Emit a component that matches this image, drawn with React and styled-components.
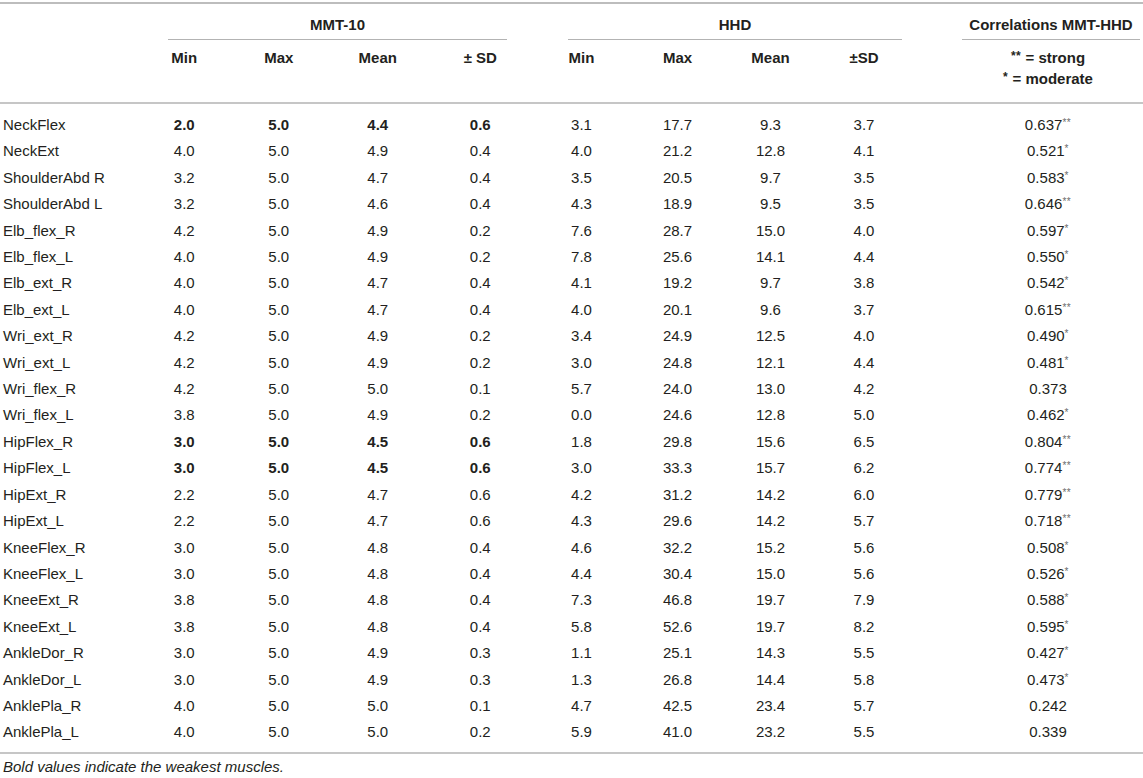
import React from 'react'
import styled, { createGlobalStyle } from 'styled-components'

const GlobalStyle = createGlobalStyle`
  html, body {
    margin: 0;
    padding: 0;
    background: #fff;
  }
  body {
    font-family: "Liberation Sans", Arial, Helvetica, sans-serif;
    color: #231f20;
  }
`

const Wrap = styled.div`
  width: 1143px;
  padding-top: 2px;
`

const Table = styled.table`
  width: 1143px;
  table-layout: fixed;
  border-collapse: collapse;
  border-top: 2px solid #bdbdbd;
  font-size: 15px;
`

const Head = styled.thead`
  border-bottom: 2px solid #c6c6c6;
`

const Body = styled.tbody`
  border-bottom: 2px solid #c6c6c6;

  tr:first-child td {
    padding-top: 8px;
  }
  tr:last-child td {
    padding-bottom: 6px;
  }
`

const GroupTh = styled.th`
  padding: 0;
  font-weight: 700;
  vertical-align: top;
`

const GroupLabel = styled.div`
  margin: 0 ${p => p.$mr}px 0 ${p => p.$ml}px;
  padding: 13px 0 6px;
  line-height: 16px;
  text-align: center;
  border-bottom: 1px solid #b3b3b3;
`

const SubTh = styled.th`
  padding: 7px 0 13px ${p => p.$pl || 0}px;
  line-height: 21px;
  font-weight: 700;
  text-align: center;
  vertical-align: top;
  white-space: nowrap;
`

const Cell = styled.td`
  padding: 0 0 0 ${p => p.$pl || 0}px;
  height: 26.4px;
  line-height: 26.4px;
  text-align: center;
  font-weight: ${p => (p.$bold ? 700 : 400)};
  white-space: nowrap;
`

const LabelCell = styled(Cell)`
  text-align: left;
  padding-left: 3px;
`

const Star = styled.span`
  font-size: ${p => (p.$head ? 12 : 10)}px;
  line-height: 0;
  vertical-align: ${p => (p.$head ? 3 : 4)}px;
  color: ${p => (p.$head ? '#231f20' : '#6b6b6b')};
  letter-spacing: 0.5px;
`

const Note = styled.p`
  margin: 0;
  padding: 5px 3px 0;
  font-size: 15px;
  line-height: 16px;
  font-style: italic;
  color: #231f20;
`

const widths = [138, 92.5, 96.5, 101.5, 103.5, 99, 93, 93, 94, 232]

const rows = [
  ['NeckFlex', ['2.0', '5.0', '4.4', '0.6'], ['3.1', '17.7', '9.3', '3.7'], '0.637', 2, true],
  ['NeckExt', ['4.0', '5.0', '4.9', '0.4'], ['4.0', '21.2', '12.8', '4.1'], '0.521', 1],
  ['ShoulderAbd R', ['3.2', '5.0', '4.7', '0.4'], ['3.5', '20.5', '9.7', '3.5'], '0.583', 1],
  ['ShoulderAbd L', ['3.2', '5.0', '4.6', '0.4'], ['4.3', '18.9', '9.5', '3.5'], '0.646', 2],
  ['Elb_flex_R', ['4.2', '5.0', '4.9', '0.2'], ['7.6', '28.7', '15.0', '4.0'], '0.597', 1],
  ['Elb_flex_L', ['4.0', '5.0', '4.9', '0.2'], ['7.8', '25.6', '14.1', '4.4'], '0.550', 1],
  ['Elb_ext_R', ['4.0', '5.0', '4.7', '0.4'], ['4.1', '19.2', '9.7', '3.8'], '0.542', 1],
  ['Elb_ext_L', ['4.0', '5.0', '4.7', '0.4'], ['4.0', '20.1', '9.6', '3.7'], '0.615', 2],
  ['Wri_ext_R', ['4.2', '5.0', '4.9', '0.2'], ['3.4', '24.9', '12.5', '4.0'], '0.490', 1],
  ['Wri_ext_L', ['4.2', '5.0', '4.9', '0.2'], ['3.0', '24.8', '12.1', '4.4'], '0.481', 1],
  ['Wri_flex_R', ['4.2', '5.0', '5.0', '0.1'], ['5.7', '24.0', '13.0', '4.2'], '0.373', 0],
  ['Wri_flex_L', ['3.8', '5.0', '4.9', '0.2'], ['0.0', '24.6', '12.8', '5.0'], '0.462', 1],
  ['HipFlex_R', ['3.0', '5.0', '4.5', '0.6'], ['1.8', '29.8', '15.6', '6.5'], '0.804', 2, true],
  ['HipFlex_L', ['3.0', '5.0', '4.5', '0.6'], ['3.0', '33.3', '15.7', '6.2'], '0.774', 2, true],
  ['HipExt_R', ['2.2', '5.0', '4.7', '0.6'], ['4.2', '31.2', '14.2', '6.0'], '0.779', 2],
  ['HipExt_L', ['2.2', '5.0', '4.7', '0.6'], ['4.3', '29.6', '14.2', '5.7'], '0.718', 2],
  ['KneeFlex_R', ['3.0', '5.0', '4.8', '0.4'], ['4.6', '32.2', '15.2', '5.6'], '0.508', 1],
  ['KneeFlex_L', ['3.0', '5.0', '4.8', '0.4'], ['4.4', '30.4', '15.0', '5.6'], '0.526', 1],
  ['KneeExt_R', ['3.8', '5.0', '4.8', '0.4'], ['7.3', '46.8', '19.7', '7.9'], '0.588', 1],
  ['KneeExt_L', ['3.8', '5.0', '4.8', '0.4'], ['5.8', '52.6', '19.7', '8.2'], '0.595', 1],
  ['AnkleDor_R', ['3.0', '5.0', '4.9', '0.3'], ['1.1', '25.1', '14.3', '5.5'], '0.427', 1],
  ['AnkleDor_L', ['3.0', '5.0', '4.9', '0.3'], ['1.3', '26.8', '14.4', '5.8'], '0.473', 1],
  ['AnklePla_R', ['4.0', '5.0', '5.0', '0.1'], ['4.7', '42.5', '23.4', '5.7'], '0.242', 0],
  ['AnklePla_L', ['4.0', '5.0', '5.0', '0.2'], ['5.9', '41.0', '23.2', '5.5'], '0.339', 0],
]

const CORR_PAD = 42

const App = () => {
  return (
    <>
      <GlobalStyle />
      <Wrap>
        <Table>
          <colgroup>
            {widths.map((w, i) => (
              <col key={i} style={{ width: w }} />
            ))}
          </colgroup>
          <Head>
            <tr>
              <GroupTh rowSpan={2} />
              <GroupTh colSpan={4}>
                <GroupLabel $ml={30} $mr={25}>MMT-10</GroupLabel>
              </GroupTh>
              <GroupTh colSpan={4}>
                <GroupLabel $ml={36} $mr={9}>HHD</GroupLabel>
              </GroupTh>
              <GroupTh>
                <GroupLabel $ml={51} $mr={3}>Correlations MMT-HHD</GroupLabel>
              </GroupTh>
            </tr>
            <tr>
              <SubTh>Min</SubTh>
              <SubTh>Max</SubTh>
              <SubTh>Mean</SubTh>
              <SubTh>± SD</SubTh>
              <SubTh>Min</SubTh>
              <SubTh>Max</SubTh>
              <SubTh>Mean</SubTh>
              <SubTh>±SD</SubTh>
              <SubTh $pl={CORR_PAD}>
                <Star $head>**</Star> = strong
                <br />
                <Star $head>*</Star> = moderate
              </SubTh>
            </tr>
          </Head>
          <Body>
            {rows.map(([name, mmt, hhd, corr, stars, bold]) => (
              <tr key={name}>
                <LabelCell>{name}</LabelCell>
                {mmt.map((v, i) => (
                  <Cell key={'m' + i} $bold={bold}>{v}</Cell>
                ))}
                {hhd.map((v, i) => (
                  <Cell key={'h' + i}>{v}</Cell>
                ))}
                <Cell $pl={CORR_PAD}>
                  {corr}
                  {stars > 0 && <Star>{'*'.repeat(stars)}</Star>}
                </Cell>
              </tr>
            ))}
          </Body>
        </Table>
        <Note>Bold values indicate the weakest muscles.</Note>
      </Wrap>
    </>
  )
}

export default App
